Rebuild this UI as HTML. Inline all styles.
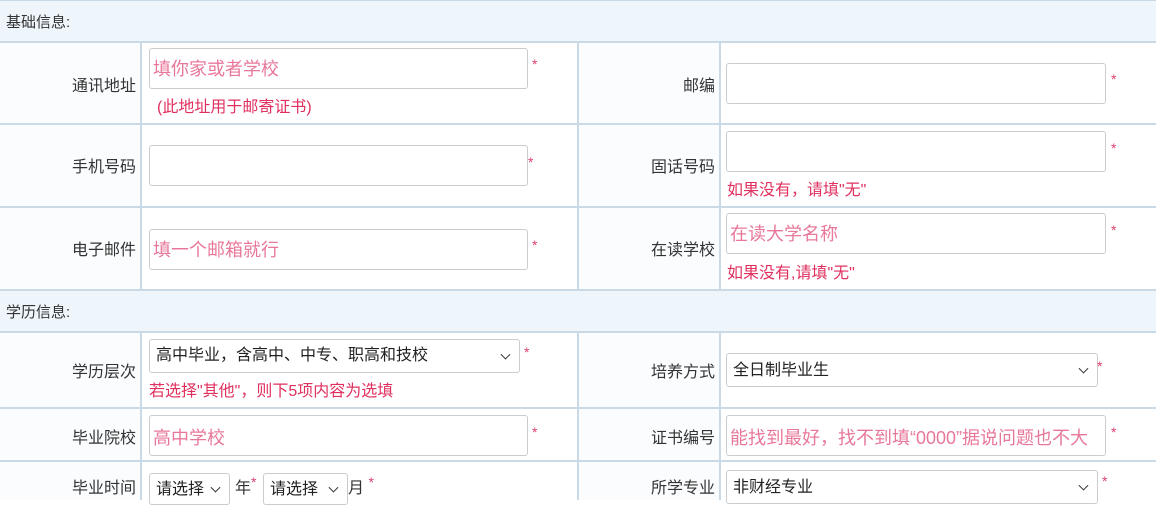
<!DOCTYPE html><html><head><meta charset="utf-8"><style>
body{margin:0;width:1156px;height:500px;overflow:hidden;background:#fff;font-family:"Liberation Sans","Noto Sans CJK SC",sans-serif;position:relative;color:#333}
.a{position:absolute;white-space:nowrap}
.hl{position:absolute;left:0;width:1156px;height:2px;background:#c9d9e6}
.vl{position:absolute;width:2px;background:#c9d9e6}
.sec{position:absolute;left:0;width:1156px;background:#eef5fb}
.lab{position:absolute;font-size:16px;text-align:right;width:130px}
.in{position:absolute;border:1px solid #ccc;border-radius:3px;background:#fff;box-sizing:border-box;font-size:18px;color:#e8789a;padding-left:3px;overflow:hidden;white-space:nowrap}
.sel{position:absolute;border:1px solid #ccc;border-radius:3px;background:#fff;box-sizing:border-box;font-size:16px;color:#222;padding-left:6px;white-space:nowrap}
.sel:after{content:"";position:absolute;right:10px;top:50%;width:6px;height:6px;border-right:1.5px solid #333;border-bottom:1.5px solid #333;transform:translateY(-70%) rotate(45deg)}
.st{position:absolute;color:#e0406e;font-size:14px}
.h{position:absolute;color:#e0305e;font-size:16px;white-space:nowrap}
.lc{position:absolute;background:#fafcfe}
</style></head><body>
<div class="sec" style="top:0;height:42px"></div>
<div class="sec" style="top:290px;height:42px"></div>
<div class="lc" style="left:0;top:42px;width:141px;height:248px"></div>
<div class="lc" style="left:579px;top:42px;width:141px;height:248px"></div>
<div class="lc" style="left:0;top:332px;width:141px;height:168px"></div>
<div class="lc" style="left:579px;top:332px;width:141px;height:168px"></div>
<div class="hl" style="top:0;height:1px"></div>
<div class="hl" style="top:41px"></div><div class="hl" style="top:123px"></div><div class="hl" style="top:206px"></div><div class="hl" style="top:289px"></div><div class="hl" style="top:331px"></div><div class="hl" style="top:407px"></div><div class="hl" style="top:460px"></div>
<div class="vl" style="left:140px;top:42px;height:248px"></div><div class="vl" style="left:577px;top:42px;height:248px"></div><div class="vl" style="left:719px;top:42px;height:248px"></div>
<div class="vl" style="left:140px;top:332px;height:168px"></div><div class="vl" style="left:577px;top:332px;height:168px"></div><div class="vl" style="left:719px;top:332px;height:168px"></div>
<div class="a" style="left:6px;top:11px;font-size:15px">基础信息:</div>
<div class="a" style="left:6px;top:301px;font-size:15px">学历信息:</div>

<div class="lab" style="left:6px;top:72px">通讯地址</div>
<div class="in" style="left:149px;top:48px;width:379px;height:41px;line-height:41px">填你家或者学校</div><div class="st" style="left:532px;top:56px">*</div>
<div class="h" style="left:157px;top:93px">(此地址用于邮寄证书)</div>
<div class="lab" style="left:585px;top:72px">邮编</div>
<div class="in" style="left:726px;top:63px;width:380px;height:41px"></div><div class="st" style="left:1111px;top:71px">*</div>

<div class="lab" style="left:6px;top:153px">手机号码</div>
<div class="in" style="left:149px;top:145px;width:379px;height:41px"></div><div class="st" style="left:528px;top:154px">*</div>
<div class="lab" style="left:585px;top:153px">固话号码</div>
<div class="in" style="left:726px;top:131px;width:380px;height:41px"></div><div class="st" style="left:1111px;top:140px">*</div>
<div class="h" style="left:727px;top:176px">如果没有，请填"无"</div>

<div class="lab" style="left:6px;top:236px">电子邮件</div>
<div class="in" style="left:149px;top:229px;width:379px;height:41px;line-height:41px">填一个邮箱就行</div><div class="st" style="left:532px;top:237px">*</div>
<div class="lab" style="left:585px;top:236px">在读学校</div>
<div class="in" style="left:726px;top:213px;width:380px;height:41px;line-height:41px">在读大学名称</div><div class="st" style="left:1111px;top:222px">*</div>
<div class="h" style="left:727px;top:259px">如果没有,请填"无"</div>

<div class="lab" style="left:6px;top:358px">学历层次</div>
<div class="sel" style="left:149px;top:339px;width:371px;height:34px;line-height:32px">高中毕业，含高中、中专、职高和技校</div><div class="st" style="left:524px;top:344px">*</div>
<div class="h" style="left:149px;top:377px">若选择"其他"，则下5项内容为选填</div>
<div class="lab" style="left:585px;top:358px">培养方式</div>
<div class="sel" style="left:726px;top:353px;width:372px;height:34px;line-height:34px">全日制毕业生</div><div class="st" style="left:1097px;top:358px">*</div>

<div class="lab" style="left:6px;top:424px">毕业院校</div>
<div class="in" style="left:149px;top:415px;width:379px;height:41px;line-height:45px">高中学校</div><div class="st" style="left:532px;top:424px">*</div>
<div class="lab" style="left:585px;top:424px">证书编号</div>
<div class="in" style="left:726px;top:415px;width:380px;height:41px;line-height:45px">能找到最好，找不到填“0000”据说问题也不大</div><div class="st" style="left:1111px;top:424px">*</div>

<div class="lab" style="left:6px;top:474px">毕业时间</div>
<div class="sel" style="left:149px;top:473px;width:81px;height:32px;line-height:32px">请选择</div>
<div class="a" style="left:235px;top:474px;font-size:16px">年<span style="color:#e0406e;font-size:14px;vertical-align:top">*</span></div>
<div class="sel" style="left:263px;top:473px;width:85px;height:32px;line-height:32px">请选择</div>
<div class="a" style="left:348px;top:474px;font-size:16px">月 <span style="color:#e0406e;font-size:14px;vertical-align:top">*</span></div>
<div class="lab" style="left:585px;top:474px">所学专业</div>
<div class="sel" style="left:726px;top:470px;width:372px;height:34px;line-height:34px">非财经专业</div><div class="st" style="left:1102px;top:473px">*</div>
</body></html>
